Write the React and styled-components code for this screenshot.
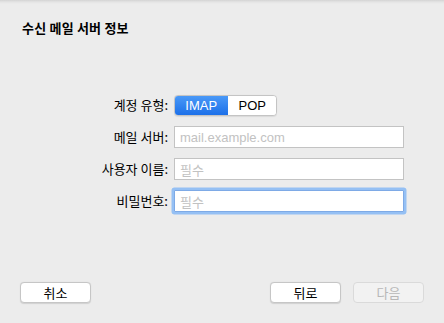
import React from 'react';
import styled, { createGlobalStyle } from 'styled-components';

const GlobalStyle = createGlobalStyle`
    html, body {
        margin: 0;
        padding: 0;
        background: #ececec;
    }
    body {
        font-family: "Noto Sans CJK KR", "Liberation Sans", sans-serif;
    }
`;

const FONT = `"Liberation Sans", "Noto Sans CJK KR", sans-serif`;

//Sheet window
const Sheet = styled.div`
    width: 444px;
    height: 323px;
    box-sizing: border-box;
    display: flex;
    flex-direction: column;
    background: #ececec;
    background-image: linear-gradient(to bottom, #d3d3d3 0, #e4e4e4 2px, #ececec 4px);
    color: #000;
    padding: 0 20px 20px;
`;

const Title = styled.h1`
    margin: 0;
    padding: 18px 0 0 2px;
    font-size: 13px;
    line-height: 20px;
    font-weight: 700;
    letter-spacing: 0.2px;
    font-family: "Noto Sans CJK KR", sans-serif;
    color: #000;
`;

const Form = styled.div`
    display: grid;
    grid-template-columns: 148px 230px;
    column-gap: 6px;
    row-gap: 10px;
    margin-top: 56px;
    align-items: center;
`;

const Label = styled.label`
    justify-self: end;
    font-size: 13px;
    line-height: 22px;
    color: #000;
    font-family: "Noto Sans CJK KR", sans-serif;
`;

const Segmented = styled.div`
    display: flex;
    width: 103px;
    height: 21px;
    box-sizing: border-box;
    border: 1px solid #c4c4c4;
    border-radius: 4px;
    overflow: hidden;
    background: #fff;
    box-shadow: 0 0.5px 1px rgba(0,0,0,0.08);
`;

const Segment = styled.div`
    flex: ${p => p.$grow};
    display: flex;
    align-items: center;
    justify-content: center;
    font-family: ${FONT};
    font-size: 13px;
    color: ${p => (p.$active ? '#fff' : '#000')};
    background: ${p => (p.$active ? 'linear-gradient(to bottom, #4c9bf8, #1a6ee8)' : '#fff')};
    ${p => p.$active && 'margin: -1px 0 -1px -1px;'}
`;

const Field = styled.div`
    height: 22px;
    box-sizing: border-box;
    border: 1px solid #c3c3c3;
    background: #fff;
    display: flex;
    align-items: center;
    padding: 0 5px;
    font-size: 13px;
    color: #c2c2c2;
    font-family: ${p => (p.$latin ? FONT : '"Noto Sans CJK KR", sans-serif')};
    ${p => p.$focused && `
        border-color: #7eaae6;
        border-radius: 1px;
        box-shadow: 0 0 0 2.5px #95c0f4;
    `}
`;

const Spacer = styled.div`
    flex: 1;
`;

const Footer = styled.div`
    display: flex;
    align-items: center;
    gap: 12px;
`;

const Button = styled.button`
    width: 71px;
    height: 21px;
    box-sizing: border-box;
    padding: 0;
    border: 1px solid ${p => (p.disabled ? '#dadada' : '#c6c6c6')};
    border-radius: 4px;
    background: ${p => (p.disabled ? '#f2f2f2' : '#fff')};
    color: ${p => (p.disabled ? '#b7b7b7' : '#000')};
    box-shadow: ${p => (p.disabled ? 'none' : '0 0.5px 1px rgba(0,0,0,0.12)')};
    font-family: "Noto Sans CJK KR", sans-serif;
    font-size: 13px;
    line-height: 19px;
    ${p => p.$pushRight && 'margin-left: auto;'}
`;

export default function App() {
    return (
        <>
            <GlobalStyle />
            <Sheet>
                <Title>수신 메일 서버 정보</Title>
                <Form>
                    <Label>계정 유형:</Label>
                    <Segmented>
                        <Segment $active $grow={55}>IMAP</Segment>
                        <Segment $grow={48}>POP</Segment>
                    </Segmented>

                    <Label>메일 서버:</Label>
                    <Field $latin>mail.example.com</Field>

                    <Label>사용자 이름:</Label>
                    <Field>필수</Field>

                    <Label>비밀번호:</Label>
                    <Field $focused>필수</Field>
                </Form>
                <Spacer />
                <Footer>
                    <Button>취소</Button>
                    <Button $pushRight>뒤로</Button>
                    <Button disabled>다음</Button>
                </Footer>
            </Sheet>
        </>
    );
}
